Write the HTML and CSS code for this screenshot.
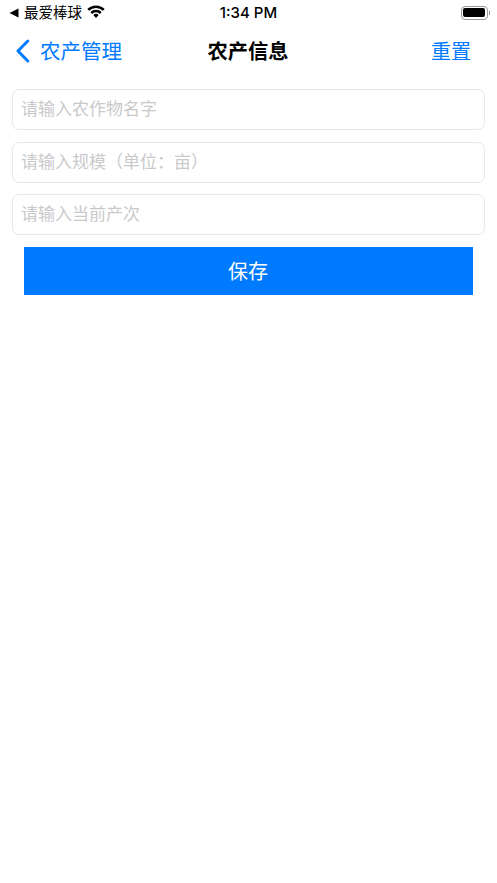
FILE: index.html
```html
<!DOCTYPE html>
<html lang="zh-CN">
<head>
  <meta charset="UTF-8">
  <meta name="viewport" content="width=device-width, initial-scale=1.0">
  <title>农产信息</title>
  <link rel="stylesheet" href="styles.css">
</head>
<body>

  <!-- Status bar -->
  <div class="status-bar">
    <div class="status-left">
      <svg class="back-arrow" viewBox="0 0 10 10" width="10" height="10"><path d="M0.5 5L9.5 0.5V9.5Z" fill="#000"/></svg>
      <span class="carrier">最爱棒球</span>
      <svg class="wifi" viewBox="0 0 18 13" width="18" height="13">
        <path d="M9 13L6.3 10.1A3.9 3.9 0 0 1 11.7 10.1Z" fill="#000"/>
        <path d="M4.2 8A6.8 6.8 0 0 1 13.8 8" fill="none" stroke="#000" stroke-width="2.5"/>
        <path d="M1.2 4.9A11 11 0 0 1 16.8 4.9" fill="none" stroke="#000" stroke-width="2.5"/>
      </svg>
    </div>
    <div class="status-time">1:34 PM</div>
    <div class="status-right">
      <div class="battery"><div class="battery-level"></div></div>
      <div class="battery-cap"></div>
    </div>
  </div>

  <!-- Nav bar -->
  <nav class="nav-bar">
    <a class="nav-back" href="#">
      <svg viewBox="0 0 15 24" width="15" height="24"><path d="M12.8 2L3 12L12.8 22" fill="none" stroke="#007aff" stroke-width="3" stroke-linecap="round" stroke-linejoin="round"/></svg>
      <span class="nav-label">农产管理</span>
    </a>
    <div class="nav-title">农产信息</div>
    <a class="nav-action" href="#">重置</a>
  </nav>

  <!-- Form -->
  <form class="crop-form">
    <input class="field" type="text" placeholder="请输入农作物名字">
    <input class="field" type="text" placeholder="请输入规模（单位：亩）">
    <input class="field" type="text" placeholder="请输入当前产次">
    <button class="save-button" type="button">保存</button>
  </form>

</body>
</html>
```

FILE: styles.css
```css
/* Reset & base */
* { margin: 0; padding: 0; box-sizing: border-box; }
body {
  background: #fff;
  color: #000;
  font-family: "Liberation Sans", "Noto Sans CJK SC", sans-serif;
}
a { text-decoration: none; }

/* Status bar */
.status-bar {
  position: relative;
  display: flex;
  justify-content: space-between;
  align-items: center;
  height: 26px;
  padding: 0 7px 0 9px;
}
.status-left { display: flex; align-items: center; }
.back-arrow { margin-right: 5px; }
.carrier { font-size: 14.5px; line-height: 20px; margin-top: -1px; }
.wifi { margin-left: 5px; margin-top: -3px; }
.status-time {
  position: absolute;
  left: 0;
  right: 0;
  text-align: center;
  font-family: "Inter", "Liberation Sans", sans-serif;
  font-size: 15px;
  font-weight: 500;
  line-height: 26px;
  pointer-events: none;
}
.status-right { display: flex; align-items: center; margin-top: -1px; }
.battery {
  width: 27px;
  height: 14px;
  padding: 1.5px;
  border: 1px solid #9a9a9a;
  border-radius: 4px;
}
.battery-level { height: 100%; background: #000; border-radius: 2px; }
.battery-cap {
  width: 1.5px;
  height: 4px;
  margin-left: 1px;
  background: #9a9a9a;
}

/* Nav bar */
.nav-bar {
  position: relative;
  display: flex;
  justify-content: space-between;
  align-items: center;
  height: 50px;
  padding: 0 26px 0 15px;
}
.nav-back {
  display: flex;
  align-items: center;
  gap: 10px;
  color: #007aff;
  font-size: 20.5px;
}
.nav-label { margin-top: -2px; }
.nav-title {
  position: absolute;
  left: 0;
  right: 1px;
  margin-top: -2px;
  text-align: center;
  font-size: 20.25px;
  font-weight: 700;
  pointer-events: none;
}
.nav-action { margin-top: -2px; color: #007aff; font-size: 20px; }

/* Form */
.crop-form {
  display: flex;
  flex-direction: column;
  gap: 11.5px;
  padding: 13px 12px 0;
}
.field {
  width: 100%;
  height: 41px;
  padding: 1px 8px 0;
  border: 1px solid #e8e8e8;
  border-radius: 7px;
  outline: none;
  background: #fff;
  font-family: inherit;
  font-size: 17px;
}
.field::placeholder { color: #c9c9cb; opacity: 1; }
.save-button {
  height: 48px;
  margin: 0.5px 12px 0;
  padding: 0 1px 2px 0;
  border: none;
  background: #007aff;
  color: #fff;
  font-family: inherit;
  font-size: 20px;
}
```
